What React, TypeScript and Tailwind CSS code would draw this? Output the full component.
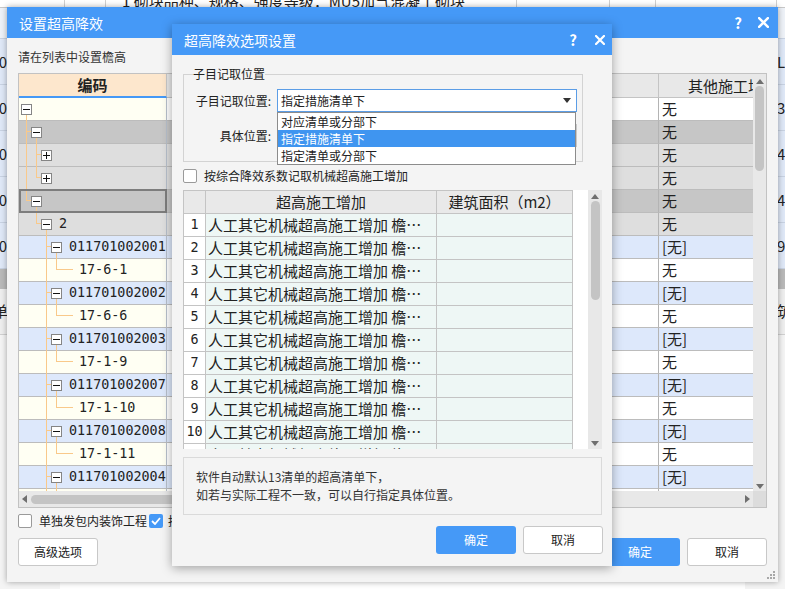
import React from 'react';

type Guide = { x: number; kind: 'full' | 'top' | 'bottom' };
type Tone = 'ivory' | 'dark' | 'light' | 'blue';
type TreeRow = {
  level: number;
  kind: 'minus' | 'plus' | 'leaf';
  text?: string;
  tone: Tone;
  value: string;
  guides: Guide[];
  stub?: [number, number];
  selected?: boolean;
};

const leftTone: Record<Tone, string> = {
  ivory: 'bg-[#fffff3]',
  dark: 'bg-[#c6c6c6]',
  light: 'bg-[#dedede]',
  blue: 'bg-[#dde8fb]',
};
const rightTone: Record<Tone, string> = {
  ivory: 'bg-white',
  dark: 'bg-[#c6c6c6]',
  light: 'bg-[#dedede]',
  blue: 'bg-[#dde8fb]',
};

const codeRow = (code: string): TreeRow => ({
  level: 3,
  kind: 'minus',
  text: code,
  tone: 'blue',
  value: '[无]',
  guides: [{ x: 27, kind: 'full' }, { x: 37, kind: 'bottom' }],
  stub: [27, 32],
});
const leafRow = (text: string): TreeRow => ({
  level: 4,
  kind: 'leaf',
  text,
  tone: 'ivory',
  value: '无',
  guides: [{ x: 27, kind: 'full' }, { x: 37, kind: 'top' }],
  stub: [37, 54],
});

const treeRows: TreeRow[] = [
  { level: 0, kind: 'minus', tone: 'ivory', value: '无', guides: [{ x: 7, kind: 'bottom' }] },
  { level: 1, kind: 'minus', tone: 'dark', value: '无', guides: [{ x: 7, kind: 'full' }, { x: 17, kind: 'bottom' }], stub: [7, 12] },
  { level: 2, kind: 'plus', tone: 'light', value: '无', guides: [{ x: 7, kind: 'full' }, { x: 17, kind: 'full' }], stub: [17, 22] },
  { level: 2, kind: 'plus', tone: 'light', value: '无', guides: [{ x: 7, kind: 'full' }, { x: 17, kind: 'top' }], stub: [17, 22] },
  { level: 1, kind: 'minus', tone: 'dark', value: '无', guides: [{ x: 7, kind: 'top' }, { x: 17, kind: 'bottom' }], stub: [7, 12], selected: true },
  { level: 2, kind: 'minus', text: '2', tone: 'light', value: '无', guides: [{ x: 17, kind: 'top' }, { x: 27, kind: 'bottom' }], stub: [17, 22] },
  codeRow('011701002001'),
  leafRow('17-6-1'),
  codeRow('011701002002'),
  leafRow('17-6-6'),
  codeRow('011701002003'),
  leafRow('17-1-9'),
  codeRow('011701002007'),
  leafRow('17-1-10'),
  codeRow('011701002008'),
  leafRow('17-1-11'),
  codeRow('011701002004'),
  { level: 4, kind: 'leaf', tone: 'ivory', value: '', guides: [{ x: 27, kind: 'full' }, { x: 37, kind: 'full' }] },
];

const ToggleBox = ({ kind }: { kind: 'minus' | 'plus' }) => (
  <span className="relative z-10 flex h-[11px] w-[11px] shrink-0 items-center justify-center border border-[#858585] bg-white">
    <svg width="7" height="7" viewBox="0 0 7 7">
      <path d="M0 3.5H7" stroke="#111" strokeWidth="1" />
      {kind === 'plus' && <path d="M3.5 0V7" stroke="#111" strokeWidth="1" />}
    </svg>
  </span>
);

const CloseIcon = ({ size = 10 }: { size?: number }) => (
  <svg width={size} height={size} viewBox="0 0 10 10">
    <path d="M1 1L9 9M9 1L1 9" stroke="white" strokeWidth="2.2" strokeLinecap="square" />
  </svg>
);

const Tri = ({ dir, color = '#7a7a7a' }: { dir: 'up' | 'down' | 'left' | 'right'; color?: string }) => {
  const d = {
    up: 'M0 5L4 0L8 5Z',
    down: 'M0 0L8 0L4 5Z',
    left: 'M5 0L5 8L0 4Z',
    right: 'M0 0L5 4L0 8Z',
  }[dir];
  const w = dir === 'up' || dir === 'down' ? 8 : 5;
  const h = dir === 'up' || dir === 'down' ? 5 : 8;
  return (
    <svg width={w} height={h} viewBox={`0 0 ${w} ${h}`}>
      <path d={d} fill={color} />
    </svg>
  );
};

const Background = () => (
  <div className="flex h-full flex-col bg-white text-[15px] text-[#222]">
    <div className="flex h-[8px] overflow-hidden border-b border-[#c8c8c8]">
      <div className="w-[65px] border-r border-[#d0d0d0]" />
      <div className="w-[41px] border-r border-[#d0d0d0]" />
      <div className="-mt-[9px] w-[411px] border-r border-[#d0d0d0] pl-[16px] leading-[20px]">
        1 砌块品种、规格、强度等级：MU5加气混凝土砌块
      </div>
      <div className="w-[93px] border-r border-[#d0d0d0]" />
      <div className="w-[46px] border-r border-[#d0d0d0]" />
      <div className="w-[121px] border-r border-[#d0d0d0]" />
    </div>
    <div className="flex flex-1 justify-between">
      <div className="flex w-[60px] flex-col">
        <div className="h-[31px] border-b border-[#c8d2e2] bg-[#eef2f8]" />
        {['10', '10', '10', '20', '20'].map((t, i) => (
          <div key={i} className="flex h-[46px] items-center justify-end border-b border-[#c8d2e2] bg-[#dfe8f7] pr-[53px] leading-none">
            {t}
          </div>
        ))}
        <div className="h-[20px] bg-[#b9b9b9]" />
        <div className="flex h-[46px] items-center justify-end border-b border-[#d0d0d0] bg-[#eeeeee] pr-[52px]">单</div>
        <div className="flex-1 bg-[#f4f4f4]" />
      </div>
      <div className="flex w-[40px] flex-col">
        <div className="h-[31px] border-b border-[#c8d2e2] bg-[#eef2f8]" />
        {['L', '3', '4', '4', '9'].map((t, i) => (
          <div key={i} className="flex h-[46px] items-center border-b border-[#c8d2e2] bg-[#dfe8f7] pl-[32px] leading-none">
            {t}
          </div>
        ))}
        <div className="h-[20px] bg-[#b9b9b9]" />
        <div className="flex h-[46px] items-center border-b border-[#d0d0d0] bg-[#eeeeee] pl-[32px]">筑</div>
        <div className="flex-1 bg-[#f4f4f4]" />
      </div>
    </div>
  </div>
);

const OuterDialog = () => (
  <div className="absolute left-[7px] top-[7px] flex h-[575px] w-[771px] flex-col bg-[#f4f4f4] shadow-[0_0_6px_rgba(0,0,0,0.35)]">
    <div className="flex h-[31px] shrink-0 items-center justify-between bg-[#4599f7] pl-[12px] pr-[9px] text-white">
      <span className="text-[14px] leading-none">设置超高降效</span>
      <div className="flex items-center gap-[16px]">
        <span className="text-[15px] font-bold leading-none">?</span>
        <CloseIcon size={11} />
      </div>
    </div>
    <div className="flex flex-1 flex-col pl-[11px] pr-[11px] pt-[11px]">
      <div className="text-[12px] leading-[16px] text-[#333]">请在列表中设置檐高</div>
      <div className="mt-[8px] flex h-[435px] w-[749px] flex-col border border-[#c2c2c2] bg-white">
        <div className="flex h-[417px]">
          <div className="w-[734px] overflow-hidden">
            <div className="flex h-[24px]">
              <div className="flex w-[148px] shrink-0 items-center justify-center border-b-2 border-r border-b-[#4599f7] border-r-[#c9c9c9] bg-[#fde7cd] text-[15px] font-bold text-[#222]">
                编码
              </div>
              <div className="w-[492px] shrink-0 border-b border-r border-[#c4c4c4] bg-[#e8e8e8]" />
              <div className="w-[130px] shrink-0 overflow-hidden whitespace-nowrap border-b border-[#c4c4c4] bg-[#e8e8e8] pl-[29px] text-[15px] leading-[23px] text-[#222]">
                其他施工增加
              </div>
            </div>
            {treeRows.map((r, i) => (
              <div key={i} className="flex h-[23px]">
                <div className={`relative flex w-[148px] shrink-0 items-center border-b border-r border-b-[#bcbcbc] border-r-[#b8c0cc] ${leftTone[r.tone]}`}>
                  {r.guides.map((g, j) => (
                    <span
                      key={j}
                      className={`absolute w-px bg-[#f9c98a] ${g.kind === 'full' ? 'top-0 h-[23px]' : g.kind === 'top' ? 'top-0 h-[11px]' : 'top-[16px] h-[7px]'}`}
                      style={{ left: g.x }}
                    />
                  ))}
                  {r.stub && (
                    <span className="absolute top-[10px] h-px bg-[#f9c98a]" style={{ left: r.stub[0], width: r.stub[1] - r.stub[0] }} />
                  )}
                  {r.kind === 'leaf' ? (
                    <span className="pl-[60px] font-['DejaVu_Sans_Mono',monospace] text-[13.4px] leading-none text-[#222]">{r.text}</span>
                  ) : (
                    <>
                      <span style={{ width: 2 + r.level * 10 }} className="shrink-0" />
                      <ToggleBox kind={r.kind} />
                      {r.text && (
                        <span className="pl-[7px] font-['DejaVu_Sans_Mono',monospace] text-[13.4px] leading-none text-[#222]">{r.text}</span>
                      )}
                    </>
                  )}
                  {r.selected && <span className="absolute -bottom-px -right-px -top-[1px] left-0 border-2 border-[#7d7d7d]" />}
                </div>
                <div className={`w-[492px] shrink-0 border-b border-r border-b-[#bcbcbc] border-r-[#b4b4b4] ${rightTone[r.tone]}`} />
                <div className={`w-[130px] shrink-0 border-b border-[#bcbcbc] pl-[3px] text-[15px] leading-[22px] text-[#222] ${rightTone[r.tone]}`}>
                  {r.value}
                </div>
              </div>
            ))}
          </div>
          <div className="flex w-[13px] flex-col items-center bg-[#e8e8e8]">
            <div className="flex h-[11px] items-end justify-center pb-[1px]">
              <Tri dir="up" color="#6f6f6f" />
            </div>
            <div className="mt-[1px] h-[85px] w-[9px] rounded-full bg-[#c4c4c4]" />
            <div className="flex-1" />
            <div className="mb-[2px]">
              <Tri dir="down" color="#6f6f6f" />
            </div>
          </div>
        </div>
        <div className="flex h-[16px]">
          <div className="flex w-[734px] items-center bg-[#e8e8e8] pl-[3px]">
            <Tri dir="left" color="#6f6f6f" />
            <div className="ml-[4px] h-[9px] w-[340px] rounded-full bg-[#c4c4c4]" />
            <div className="flex-1" />
            <div className="mr-[3px]">
              <Tri dir="right" color="#6f6f6f" />
            </div>
          </div>
          <div className="w-[13px] bg-[#dcdcdc]" />
        </div>
      </div>
      <div className="mt-[6px] flex h-[14px] items-center text-[12px] text-[#222]">
        <span className="h-[14px] w-[14px] rounded-[2px] border border-[#9a9a9a] bg-white" />
        <span className="ml-[7px] leading-none">单独发包内装饰工程</span>
        <span className="ml-[2px] flex h-[14px] w-[14px] items-center justify-center rounded-[2px] bg-[#4599f7]">
          <svg width="10" height="8" viewBox="0 0 10 8">
            <path d="M1 4L4 7L9 1" stroke="white" strokeWidth="1.8" fill="none" />
          </svg>
        </span>
        <span className="ml-[5px] leading-none">按综合降效系数记取</span>
      </div>
      <div className="mt-[10px] flex h-[28px] items-center">
        <button className="h-[28px] w-[80px] rounded-[3px] border border-[#c8c8c8] bg-white text-[12px] text-[#222]">高级选项</button>
        <div className="flex-1" />
        <button className="h-[28px] w-[80px] rounded-[3px] bg-[#4599f7] text-[12px] text-white">确定</button>
        <button className="ml-[7px] h-[28px] w-[80px] rounded-[3px] border border-[#c8c8c8] bg-white text-[12px] text-[#222]">取消</button>
      </div>
      <div className="flex flex-1 items-end justify-end pb-[3px]">
        <svg width="8" height="8" viewBox="0 0 8 8" className="-mr-[8px]">
          <rect x="6" y="0" width="2" height="2" fill="#a8a8a8" />
          <rect x="3" y="3" width="2" height="2" fill="#a8a8a8" />
          <rect x="6" y="3" width="2" height="2" fill="#a8a8a8" />
          <rect x="0" y="6" width="2" height="2" fill="#a8a8a8" />
          <rect x="3" y="6" width="2" height="2" fill="#a8a8a8" />
          <rect x="6" y="6" width="2" height="2" fill="#a8a8a8" />
        </svg>
      </div>
    </div>
  </div>
);

const InnerDialog = () => (
  <div className="absolute left-[172px] top-[24px] flex h-[542px] w-[440px] flex-col bg-[#f4f4f4] shadow-[0_2px_10px_rgba(0,0,0,0.35)]">
    <div className="flex h-[31px] shrink-0 items-center justify-between bg-[#4599f7] pl-[12px] pr-[7px] text-white">
      <span className="text-[14px] leading-none">超高降效选项设置</span>
      <div className="flex items-center gap-[18px]">
        <span className="text-[15px] font-bold leading-none">?</span>
        <CloseIcon size={10} />
      </div>
    </div>
    <div className="flex flex-1 flex-col pl-[11px] pr-[10px] pt-[11px] text-[12px] text-[#222]">
      <fieldset className="w-[400px] border border-[#d3d3d3] pb-[14px] pl-[9px] pr-[5px]">
        <legend className="px-0 leading-[16px]">子目记取位置</legend>
        <div className="mt-[7px] flex items-center">
          <span className="w-[78px] text-right">子目记取位置:</span>
          <div className="relative ml-[6px]">
            <div className="flex h-[23px] w-[300px] items-center justify-between border border-[#5b9de6] bg-white pl-[3px] pr-[5px]">
              <span>指定措施清单下</span>
              <Tri dir="down" color="#333" />
            </div>
            <div className="absolute left-0 top-[23px] z-20 flex w-[299px] flex-col border border-[#8c8c8c] bg-white">
              <div className="h-[17px] pl-[3px] leading-[17px]">对应清单或分部下</div>
              <div className="h-[17px] bg-[#3f95f0] pl-[3px] leading-[17px] text-white">指定措施清单下</div>
              <div className="h-[17px] pl-[3px] leading-[17px]">指定清单或分部下</div>
            </div>
          </div>
        </div>
        <div className="mt-[12px] flex items-center">
          <span className="w-[78px] text-right">具体位置:</span>
          <div className="ml-[6px] h-[23px] w-[300px] border border-[#c8c8c8] bg-white" />
        </div>
      </fieldset>
      <div className="mt-[7px] flex h-[14px] items-center">
        <span className="h-[14px] w-[14px] rounded-[2px] border border-[#9a9a9a] bg-white" />
        <span className="ml-[7px] leading-none">按综合降效系数记取机械超高施工增加</span>
      </div>
      <div className="mt-[7px] flex h-[259px] w-[419px] overflow-hidden bg-white">
        <div className="w-[390px] self-start border-l border-t border-[#c4c4c4] text-[15px] leading-[22px] text-[#222]">
          <div className="flex h-[23px]">
            <div className="w-[22px] shrink-0 border-b border-r border-[#c4c4c4] bg-[#e9e9e9]" />
            <div className="w-[231px] shrink-0 border-b border-r border-[#c4c4c4] bg-[#e9e9e9] text-center">超高施工增加</div>
            <div className="w-[136px] shrink-0 border-b border-r border-[#c4c4c4] bg-[#e9e9e9] text-center">建筑面积（m2）</div>
          </div>
          {Array.from({ length: 11 }, (_, i) => (
            <div key={i} className="flex h-[23px]">
              <div className="w-[22px] shrink-0 border-b border-r border-[#c4c4c4] bg-white text-center font-['DejaVu_Sans_Mono',monospace] text-[13.4px]">
                {i + 1}
              </div>
              <div className="w-[231px] shrink-0 overflow-hidden whitespace-nowrap border-b border-r border-[#c4c4c4] bg-[#eef7f5] pl-[2px]">
                人工其它机械超高施工增加 檐…
              </div>
              <div className="w-[136px] shrink-0 border-b border-r border-[#c4c4c4] bg-[#eef7f5]" />
            </div>
          ))}
        </div>
        <div className="flex-1" />
        <div className="flex w-[14px] flex-col items-center bg-[#e8e8e8]">
          <div className="flex h-[9px] items-end justify-center">
            <Tri dir="up" color="#6f6f6f" />
          </div>
          <div className="mt-[2px] h-[99px] w-[9px] rounded-full bg-[#c4c4c4]" />
          <div className="flex-1" />
          <div className="mb-[3px]">
            <Tri dir="down" color="#6f6f6f" />
          </div>
        </div>
      </div>
      <div className="mt-[8px] flex h-[58px] w-[419px] flex-col justify-center border border-[#dadada] pl-[12px] leading-[18px] text-[#333]">
        <div>软件自动默认13清单的超高清单下，</div>
        <div>如若与实际工程不一致，可以自行指定具体位置。</div>
      </div>
      <div className="mt-[11px] flex w-[420px] justify-end gap-[7px]">
        <button className="h-[28px] w-[80px] rounded-[3px] bg-[#4599f7] text-[12px] text-white">确定</button>
        <button className="h-[28px] w-[80px] rounded-[3px] border border-[#c8c8c8] bg-white text-[12px] text-[#222]">取消</button>
      </div>
    </div>
  </div>
);

export default function App() {
  return (
    <div className="relative h-[589px] w-[785px] overflow-hidden font-['Noto_Sans_CJK_SC',sans-serif]">
      <Background />
      <OuterDialog />
      <InnerDialog />
    </div>
  );
}
